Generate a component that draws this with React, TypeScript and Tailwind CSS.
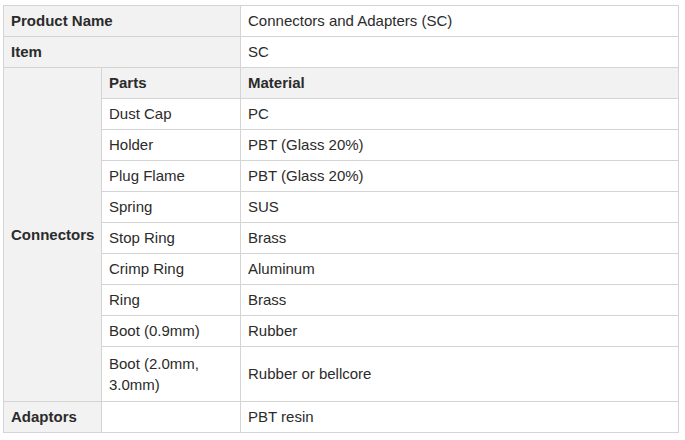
import React from "react";

const rows: [string, string][] = [
  ["Dust Cap", "PC"],
  ["Holder", "PBT (Glass 20%)"],
  ["Plug Flame", "PBT (Glass 20%)"],
  ["Spring", "SUS"],
  ["Stop Ring", "Brass"],
  ["Crimp Ring", "Aluminum"],
  ["Ring", "Brass"],
  ["Boot (0.9mm)", "Rubber"],
];

const cell = "border border-[#d4d4d4] px-[7px] align-middle";
const head = "bg-[#f2f2f2] font-bold";

export default function App() {
  return (
    <div
      className="w-[685px] h-[440px] bg-white pt-[5px] pl-[3px] text-[15px] leading-[20px] text-[#2b2b2b]"
      style={{ fontFamily: '"Liberation Sans", Arial, sans-serif' }}
    >
      <table className="border-collapse w-[676px] table-fixed">
        <colgroup>
          <col className="w-[98px]" />
          <col className="w-[139px]" />
          <col />
        </colgroup>
        <tbody>
          <tr className="h-[31px]">
            <td colSpan={2} className={`${cell} ${head}`}>Product Name</td>
            <td className={cell}>Connectors and Adapters (SC)</td>
          </tr>
          <tr className="h-[31px]">
            <td colSpan={2} className={`${cell} ${head}`}>Item</td>
            <td className={cell}>SC</td>
          </tr>
          <tr className="h-[31px]">
            <td rowSpan={10} className={`${cell} ${head}`}>Connectors</td>
            <td className={`${cell} ${head}`}>Parts</td>
            <td className={`${cell} ${head}`}>Material</td>
          </tr>
          {rows.map(([p, m]) => (
            <tr key={p} className="h-[31px]">
              <td className={cell}>{p}</td>
              <td className={cell}>{m}</td>
            </tr>
          ))}
          <tr className="h-[55px]">
            <td className={`${cell} leading-[21px]`}>
              Boot (2.0mm,
              <br />
              3.0mm)
            </td>
            <td className={cell}>Rubber or bellcore</td>
          </tr>
          <tr className="h-[31px]">
            <td className={`${cell} ${head}`}>Adaptors</td>
            <td className={cell}></td>
            <td className={cell}>PBT resin</td>
          </tr>
        </tbody>
      </table>
    </div>
  );
}
